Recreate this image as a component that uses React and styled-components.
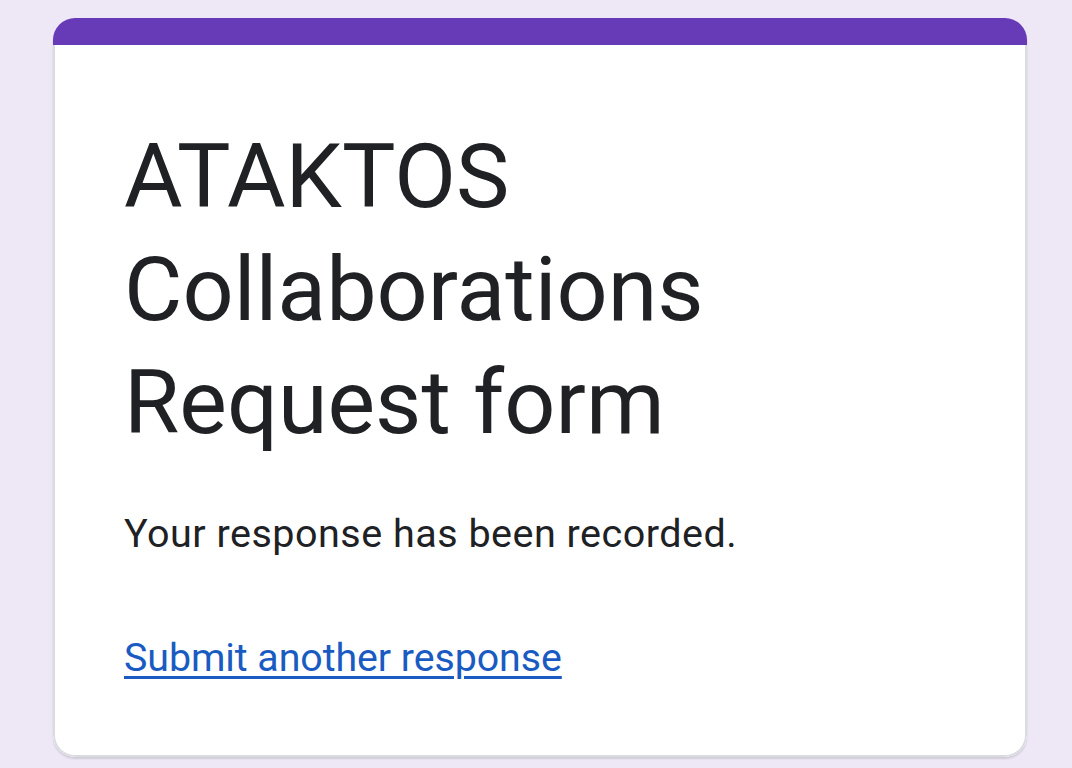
import React from "react";
import { styled, createGlobalStyle } from "styled-components";

const Global = createGlobalStyle`
  html, body {
    margin: 0;
    padding: 0;
    background: #ede7f6;
  }
  body {
    font-family: Roboto, "Liberation Sans", sans-serif;
    color: #202124;
  }
`;

const Page = styled.div`
  min-height: 768px;
  padding: 18px 45px 0 53px;
  box-sizing: border-box;
`;

const Card = styled.div`
  width: 974px;
  border-radius: 22px;
  background: #fff;
  box-shadow: 0 2px 2px rgba(0, 0, 0, 0.12);
  overflow: hidden;
`;

const TopBar = styled.div`
  height: 27px;
  background: #673ab7;
`;

const Body = styled.div`
  border: 2px solid #dadce0;
  border-top: none;
  border-radius: 0 0 22px 22px;
  padding: 75px 68px 68px 69px;
`;

const Title = styled.h1`
  margin: 0;
  font-size: 89.8px;
  font-weight: 400;
  line-height: 113px;
  letter-spacing: 0;
  max-width: 640px;
`;

const Message = styled.p`
  margin: 46px 0 0;
  font-size: 39.5px;
  line-height: 57px;
  letter-spacing: 0.5px;
`;

const Another = styled.a`
  display: inline-block;
  margin-top: 68px;
  font-size: 39.3px;
  line-height: 57px;
  color: #1a5bc2;
  text-decoration: underline;
  text-decoration-thickness: 3px;
  text-underline-offset: 5px;
  letter-spacing: -0.05px;
`;

export default function App() {
  return (
    <>
      <Global />
      <Page>
        <Card>
          <TopBar />
          <Body>
            <Title>ATAKTOS Collaborations Request form</Title>
            <Message>Your response has been recorded.</Message>
            <Another href="#">Submit another response</Another>
          </Body>
        </Card>
      </Page>
    </>
  );
}
